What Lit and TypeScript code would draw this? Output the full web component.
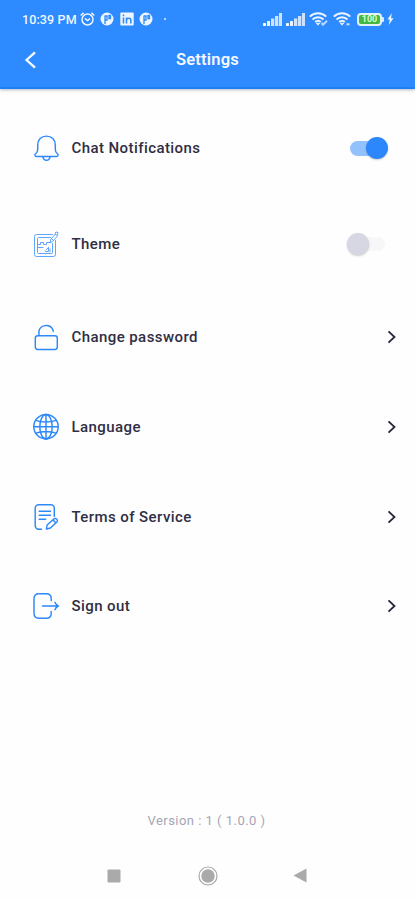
import { LitElement, html, css, svg } from "lit";
import { customElement } from "lit/decorators.js";
import { classMap } from "lit/directives/class-map.js";

const icons = {
  bell: svg`<path d="M3.300 21.400h20.400c1.500 0 1.900-1.900.8-2.600-1.600-1.100-2.200-2.300-2.200-4.300V10c0-5.300-3.500-8.900-8.800-8.900S4.700 4.700 4.700 10v4.500c0 2-.6 3.200-2.200 4.300-1.100.7-.7 2.600.8 2.600z"/><path d="M9.800 21.600c.5 2.300 1.900 3.700 3.700 3.700s3.200-1.400 3.700-3.700"/>`,
  theme: svg`<g stroke-width="1"><path d="M19.500 3.500H3.500a2 2 0 0 0-2 2v18a2 2 0 0 0 2 2h17a2 2 0 0 0 2-2V9.500"/><path d="M17.500 6.500H5.500a1 1 0 0 0-1 1v14a1 1 0 0 0 1 1h13a1 1 0 0 0 1-1v-9M4.500 13.500h3v-2h3v2h3v-2h4M5 16.500h5M13 19l2-2M12.500 20.500h3v-4M17 18v3"/><path d="M17 11.500l1-3.500 4.500-5 2 2-4.500 5zM22 3.500l.8-2.500 2.200.5-.5 2.500M19 8l1.500 1.500"/></g>`,
  lock: svg`<rect x="2.300" y="11.700" width="22" height="13.700" rx="2.400"/><path d="M5.900 11.500V7.700A7.300 6.900 0 0 1 19.800 5.600l.5 1.700"/>`,
  globe: svg`<circle cx="13" cy="12.700" r="12.200"/><ellipse cx="13" cy="12.700" rx="6.200" ry="12.200"/><path d="M13 .5v24.400M.8 12.700h24.400M3 6.300c3 1.200 6 1.700 10 1.700s7-.5 10-1.700M3 19.100c3-1.200 6-1.700 10-1.700s7 .5 10 1.700"/>`,
  terms: svg`<path d="M8.500 25.200H5.700a3.500 3.500 0 0 1-3.500-3.500V4.200A3.500 3.500 0 0 1 5.700.7h12.100a3.500 3.500 0 0 1 3.500 3.500v8.300M6.200 7.300H17.500M6.200 11.300H17.500M6.200 15.300h6.500"/><path d="M13.400 25l.7-4 7-6.200c1.700-1.200 4.200 1 3 2.900l-6.700 6.300zM20 16l3 3"/>`,
  exit: svg`<path d="M18.200 7.500V5.500C18.200 2.400 16.300.7 13.200.7H6C2.900.7 1 2.500 1 5.700v14.500c0 3.200 1.900 5 5 5h7.200c3.100 0 5-1.700 5-4.800v-2"/><path d="M9.500 13h15.300M21.900 9.300c.8 2 1.800 3 3.500 3.700-1.700.7-2.700 1.700-3.500 3.700"/>`,
};

type Row = { icon: keyof typeof icons; label: string; toggle?: boolean };

const rows: Row[] = [
  { icon: "bell", label: "Chat Notifications", toggle: true },
  { icon: "theme", label: "Theme", toggle: false },
  { icon: "lock", label: "Change password" },
  { icon: "globe", label: "Language" },
  { icon: "terms", label: "Terms of Service" },
  { icon: "exit", label: "Sign out" },
];

@customElement("status-bar")
class StatusBar extends LitElement {
  static styles = css`
    :host { display: flex; align-items: center; height: 38px; padding: 0 21px 0 22px; color: #eef6ff; }
    .time { font-size: 12.500px; font-weight: 500; width: 58px; white-space: nowrap; letter-spacing: 0.12px; }
    svg { display: block; flex: none; }
    .left { display: flex; gap: 5.300px; align-items: center; }
    .dot { width: 2px; height: 2px; border-radius: 50%; background: #e2efff; margin-left: 6px; }
    .right { display: flex; align-items: center; margin-left: auto; }
    .signal { margin-right: 4px; }
    .wifi { margin-right: 5px; }
    .battery { box-sizing: border-box; width: 25px; height: 13px; border: 2px solid #e3f4f5; border-radius: 4px; background: #43b944; font-size: 9px; line-height: 9.500px; text-align: center; font-weight: 700; color: #d9ffd0; }
    .tip { width: 2px; height: 5px; background: #d7eaff; border-radius: 0 1px 1px 0; margin-right: 3px; }
  `;

  private badge() {
    return html`<svg width="14" height="14" viewBox="0 0 14 14"><circle cx="7" cy="7" r="6.500" fill="#edf5ff"/><path d="M5 12V3.500M5 4h2v4H5M9 3.500h1.500v3H9z" fill="none" stroke="#2c89fb" stroke-width="1.300"/></svg>`;
  }

  private signal() {
    return html`<svg class="signal" width="19" height="13" viewBox="0 0 19 13" fill="#cde2ff"><rect y="10" width="3" height="3" rx=".8" fill="#fff"/><rect x="4" y="8" width="3" height="5" fill="#eaf3ff"/><rect x="8" y="5.500" width="3.300" height="7.500"/><rect x="12" y="3" width="3.300" height="10"/><rect x="16" width="3" height="13"/></svg>`;
  }

  private wifi(check: boolean) {
    return html`<svg class="wifi" width="19" height="14" viewBox="0 0 19 14" fill="none" stroke="#eef6ff" stroke-width="2"><path d="M.8 4.600C5.500.1 12.500.1 17.200 4.600M3.500 7.400c3.200-3 7.800-3 11 0M6.200 10c1.700-1.500 3.900-1.500 5.600 0"/><path d="M7.300 11.200h3.400L9 13.200z" fill="#eef6ff" stroke-width=".8"/>${check
      ? svg`<path d="M12.500 11l1.500 1.800 4-4" stroke="#b9d8ff"/>`
      : svg`<path d="M13.500 12.300h3" stroke="#cce2ff"/>`}</svg>`;
  }

  render() {
    return html`
      <span class="time">10:39 PM</span>
      <div class="left">
        <svg width="15" height="14" viewBox="0 0 15 14" fill="none" stroke="#edf5ff" stroke-width="1.500"><circle cx="7.500" cy="7.500" r="5.500"/><path d="M.7 3.500L3.600.9M14.300 3.500L11.400.9M4.800 6.300l2.700 2.200 2.500-1.800"/></svg>
        ${this.badge()}
        <svg width="14" height="14" viewBox="0 0 14 14"><rect x=".3" y=".5" width="13.400" height="13" rx="1" fill="#edf5ff"/><path d="M3.500 5.500v6M3.500 2.600v1.600M6.500 11.500v-6M6.500 7.800c.5-2.200 4.300-2.300 4.300.3v3.400" fill="none" stroke="#2c89fb" stroke-width="1.500"/></svg>
        ${this.badge()}
        <span class="dot"></span>
      </div>
      <div class="right">
        ${this.signal()}${this.signal()}${this.wifi(true)}${this.wifi(false)}
        <span class="battery">100</span><span class="tip"></span>
        <svg width="7" height="12" viewBox="0 0 7 12" fill="#edf5ff"><path d="M4.800 0L.5 6.600h2.300L1.700 12 6.500 5.200H4z"/></svg>
      </div>
    `;
  }
}

@customElement("setting-row")
class SettingRow extends LitElement {
  static properties = { row: { attribute: false } };
  declare row: Row;

  static styles = css`
    :host { display: flex; align-items: center; padding: 0 18px 0 33px; }
    svg { flex: none; display: block; fill: none; overflow: visible; }
    .icon { stroke: #2d88fa; stroke-width: 1.450; stroke-linecap: round; stroke-linejoin: round; }
    .faint { opacity: 0.75; }
    .label { flex: 1; margin-left: 12.500px; font-size: 15px; line-height: 20px; font-weight: 500; letter-spacing: 0.42px; color: #302e44; }
    .chevron { stroke: #27253c; stroke-width: 1.800; }
    .toggle { display: flex; align-items: center; width: 32px; height: 14px; border-radius: 8px; background: #f7f7fa; margin-right: 12.500px; }
    .toggle.on { width: 33px; height: 15px; background: #92c2fd; margin-right: 14px; justify-content: flex-end; }
    .knob { flex: none; width: 22px; height: 22px; border-radius: 50%; background: #d7d6e3; box-shadow: 0 1px 2px #0003; margin: 0 -6px; }
    .on .knob { background: #2b87fb; margin: 0 -5px; }
  `;

  render() {
    const { icon, label, toggle } = this.row;
    return html`
      <svg class=${classMap({ icon: true, faint: icon === "theme" })} width="26" height="26" viewBox="0 0 26 26">${icons[icon]}</svg>
      <span class="label">${label}</span>
      ${toggle === undefined
        ? html`<svg class="chevron" width="10" height="14" viewBox="0 0 10 14"><path d="M1.500 1.300L7.500 7l-6 5.700"/></svg>`
        : html`<span class=${classMap({ toggle: true, on: toggle })}><span class="knob"></span></span>`}
    `;
  }
}

@customElement("app-root")
class AppRoot extends LitElement {
  static styles = css`
    :host { display: flex; flex-direction: column; width: 415px; height: 900px; background: #fefefe; font-family: Roboto, sans-serif; overflow: hidden; }
    header { height: 89px; flex: none; background: #2d8aff; color: #f4f9ff; box-sizing: border-box; border-bottom: 2px solid #1d80f5; box-shadow: 0 1px 3px #3c538066; }
    .bar { display: grid; grid-template-columns: 60px 1fr 60px; align-items: center; height: 44px; }
    .back { display: block; margin-left: 24px; fill: none; stroke: #f7fbff; stroke-width: 2.300; }
    h1 { margin: 0; text-align: center; font-size: 16.500px; font-weight: 600; line-height: 22px; letter-spacing: 0.2px; }
    .list { display: grid; grid-template-rows: 96px 96px 90px 89px 91px 88px; padding-top: 11px; }
    .version { margin-top: auto; text-align: center; font-size: 13px; line-height: 18px; color: #a5a5b6; letter-spacing: 0.48px; padding-right: 2px; }
    nav { display: flex; justify-content: space-between; align-items: center; height: 49px; margin-top: 21px; padding: 0 108px 0 107px; flex: none; }
    nav svg { fill: #aaa; }
    .home { margin-left: 1px; }
  `;

  render() {
    return html`
      <header>
        <status-bar></status-bar>
        <div class="bar">
          <svg class="back" width="13" height="18" viewBox="0 0 13 18"><path d="M11 1.300L2.500 9l8.500 7.700"/></svg>
          <h1>Settings</h1>
        </div>
      </header>
      <main class="list">${rows.map((row) => html`<setting-row .row=${row}></setting-row>`)}</main>
      <div class="version">Version : 1 ( 1.0.0 )</div>
      <nav>
        <svg width="14" height="14"><rect x=".5" y=".5" width="13" height="13" rx="1"/></svg>
        <svg class="home" width="20" height="20" viewBox="0 0 20 20"><circle cx="10" cy="10" r="9" fill="none" stroke="#aaa" stroke-width="1.200"/><circle cx="10" cy="10" r="6.700"/></svg>
        <svg width="14" height="15"><path d="M13.500.5v14L.5 7.500z"/></svg>
      </nav>
    `;
  }
}
